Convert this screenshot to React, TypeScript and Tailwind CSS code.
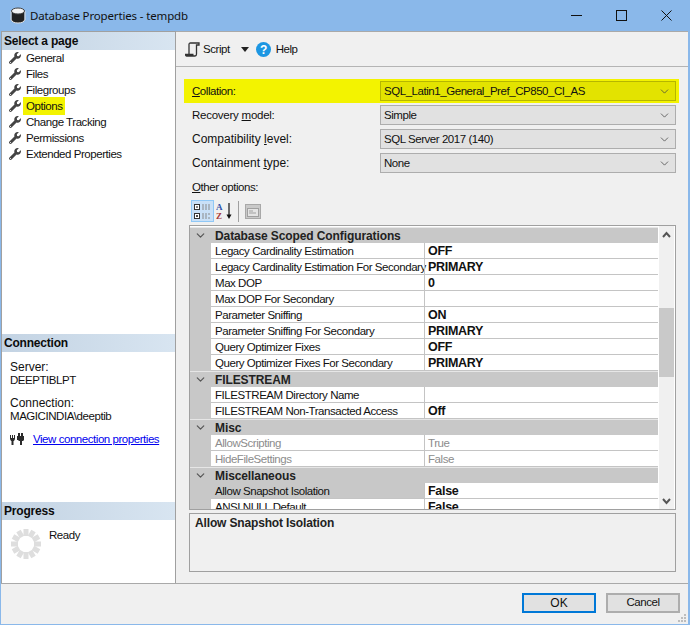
import { ChevronDown } from "lucide-react";
import { FaWrench } from "react-icons/fa";

const pages = ["General", "Files", "Filegroups", "Options", "Change Tracking", "Permissions", "Extended Properties"];

type Row = { name: string; value?: string; muted?: boolean; selected?: boolean };
type Group = { title: string; rows: Row[] };

const groups: Group[] = [
  {
    title: "Database Scoped Configurations",
    rows: [
      { name: "Legacy Cardinality Estimation", value: "OFF" },
      { name: "Legacy Cardinality Estimation For Secondary", value: "PRIMARY" },
      { name: "Max DOP", value: "0" },
      { name: "Max DOP For Secondary" },
      { name: "Parameter Sniffing", value: "ON" },
      { name: "Parameter Sniffing For Secondary", value: "PRIMARY" },
      { name: "Query Optimizer Fixes", value: "OFF" },
      { name: "Query Optimizer Fixes For Secondary", value: "PRIMARY" },
    ],
  },
  {
    title: "FILESTREAM",
    rows: [
      { name: "FILESTREAM Directory Name" },
      { name: "FILESTREAM Non-Transacted Access", value: "Off" },
    ],
  },
  {
    title: "Misc",
    rows: [
      { name: "AllowScripting", value: "True", muted: true },
      { name: "HideFileSettings", value: "False", muted: true },
    ],
  },
  {
    title: "Miscellaneous",
    rows: [
      { name: "Allow Snapshot Isolation", value: "False", selected: true },
      { name: "ANSI NULL Default", value: "False" },
    ],
  },
];

function SectionHeader({ title }: { title: string }) {
  return (
    <div className="h-[18px] shrink-0 pl-[2px] bg-gradient-to-r from-[#c3d3e3] to-[#d8e5f1] text-[12px] leading-[18px] font-bold tracking-[-0.2px] text-[#0c0c0c]">
      {title}
    </div>
  );
}

function Combo({ value, yellow }: { value: string; yellow?: boolean }) {
  return (
    <div
      className={`w-[296px] h-[20px] flex items-center justify-between pl-[3px] pr-[4px] border border-solid ${
        yellow ? "bg-[#e3e300] border-[#b6b600]" : "bg-[#e1e1e1] border-[#adadad]"
      }`}
    >
      <span>{value}</span>
      <ChevronDown size={13} strokeWidth={1.4} className="text-[#444]" />
    </div>
  );
}

function DbIcon() {
  return (
    <svg width="16" height="17" viewBox="0 0 16 17" className="shrink-0">
      <ellipse cx="8" cy="13" rx="6.5" ry="3" fill="#222" stroke="#ddd" />
      <rect x="1.5" y="4" width="13" height="9" fill="#222" />
      <path d="M1 4v9M15 4v9" stroke="#ddd" />
      <ellipse cx="8" cy="4" rx="6.5" ry="3" fill="#f4f4f4" stroke="#444" />
    </svg>
  );
}

function WindowButtons() {
  return (
    <div className="ml-auto flex items-center gap-[34px]">
      <svg width="11" height="11" viewBox="0 0 11 11" stroke="#111" fill="none">
        <path d="M0 5.5h11" />
      </svg>
      <svg width="11" height="11" viewBox="0 0 11 11" stroke="#111" fill="none">
        <rect x="0.5" y="0.5" width="10" height="10" />
      </svg>
      <svg width="11" height="11" viewBox="0 0 11 11" stroke="#111" fill="none">
        <path d="M0.5 0.5l10 10M10.5 0.5l-10 10" />
      </svg>
    </div>
  );
}

function ScriptIcon() {
  return (
    <svg width="15" height="15" viewBox="0 0 15 15" fill="none" stroke="#333" strokeWidth="1.3">
      <path d="M4 13V2.5c0-1 .5-1.5 1.5-1.5H14v2h-2.5V12c0 1-.5 2-1.5 2H1.5c-1 0-1-1-1-1.5h8" />
    </svg>
  );
}

function HelpIcon() {
  return (
    <svg width="15" height="15" viewBox="0 0 15 15">
      <circle cx="7.5" cy="7.5" r="7.5" fill="#1c96e2" />
      <text x="7.5" y="12" textAnchor="middle" fontSize="12" fontWeight="700" fill="#fff" fontFamily="'Liberation Sans', sans-serif">
        ?
      </text>
    </svg>
  );
}

function PlugIcon() {
  return (
    <svg width="15" height="13" viewBox="0 0 15 13" fill="#2b2b2b">
      <path d="M0 2h1v3h1V2h1v3h1V2h1v4l-1 2H3.5v4h-2V8H1L0 6z" />
      <path d="M8 0h2v3h1V0h2v3h1v4l-1 1h-1v4H10V8H9L8 7H7V3h1z" />
    </svg>
  );
}

function Spinner() {
  const marks = Array.from({ length: 12 }, (_, i) => i * 30);
  return (
    <svg width="30" height="30" viewBox="0 0 30 30" className="shrink-0">
      {marks.map((a) => (
        <rect key={a} x="12.5" y="0" width="5" height="7" fill="#dedede" transform={`rotate(${a} 15 15)`} />
      ))}
    </svg>
  );
}

function CategorizedIcon() {
  return (
    <svg width="19" height="17" viewBox="0 0 19 17" fill="none">
      <rect x="1.5" y="1.5" width="5" height="5" fill="#fff" stroke="#333" />
      <rect x="1.5" y="10.5" width="5" height="5" fill="#fff" stroke="#333" />
      <path d="M3 4h2M3 13h2M4 12v2" stroke="#111" />
      <path d="M9 2h8M9 4h8M9 6h8M9 11h8M9 13h6M9 15h8" stroke="#8a8a8a" strokeDasharray="2 1" />
    </svg>
  );
}

function SortIcon() {
  return (
    <svg width="18" height="18" viewBox="0 0 18 18">
      <text x="0" y="8" fontSize="9" fontWeight="700" fill="#2f52a8" fontFamily="'Liberation Serif', serif">
        A
      </text>
      <text x="0" y="17" fontSize="9" fontWeight="700" fill="#a83a3a" fontFamily="'Liberation Serif', serif">
        Z
      </text>
      <path d="M13 1v13" stroke="#111" strokeWidth="1.2" />
      <path d="M10.5 12.5h5L13 17z" fill="#111" />
    </svg>
  );
}

function PagesIcon() {
  return (
    <svg width="16" height="15" viewBox="0 0 16 15">
      <rect x="0.5" y="0.5" width="15" height="14" fill="#c9c9c9" stroke="#a8a8a8" />
      <rect x="2.5" y="4.5" width="11" height="8" fill="#e4e4e4" stroke="#a0a0a0" />
      <path d="M4 7h4M4 9h7" stroke="#a0a0a0" />
    </svg>
  );
}

function GridRow({ row }: { row: Row }) {
  return (
    <div className="flex h-[16px] shrink-0 leading-[16px]">
      <div className="w-[21px] shrink-0 bg-[#c8c8c8]" />
      <div
        className={`w-[213px] shrink-0 pl-[4px] whitespace-nowrap border-b border-solid border-[#c4c4c4] ${
          row.selected ? "bg-[#c8c8c8]" : ""
        } ${row.muted ? "text-[#8c8c8c]" : ""}`}
      >
        {row.name}
      </div>
      <div
        className={`flex-1 pl-[3px] border-l border-b border-solid border-[#c4c4c4] whitespace-nowrap ${
          row.muted ? "text-[#8c8c8c]" : "font-bold text-[12.5px] tracking-[-0.3px]"
        }`}
      >
        {row.value}
      </div>
    </div>
  );
}

export default function App() {
  return (
    <div className="w-[690px] h-[625px] flex flex-col overflow-hidden bg-[#8ab8ea] text-[11.5px] tracking-[-0.45px] leading-[16px] text-[#111] font-['Liberation_Sans',Arial,sans-serif]">
      {/* title bar */}
      <div className="h-[31px] shrink-0 flex items-center pl-[10px] pr-[18px]">
        <DbIcon />
        <span className="ml-[4px] text-[11.5px] tracking-[-0.15px] text-[#111] font-['Noto_Sans',sans-serif]">Database Properties - tempdb</span>
        <WindowButtons />
      </div>

      <div className="flex-1 min-h-0 mx-[1px] mb-[1px] mr-[2px] flex flex-col bg-[#f0f0f0]">
        <div className="flex-1 min-h-0 flex border-b border-solid border-[#a9a9a9]">
          {/* left panel */}
          <div className="w-[175px] shrink-0 flex flex-col bg-white border-x border-t border-solid border-[#a0a0a0]">
            <div className="h-[302px] shrink-0">
              <SectionHeader title="Select a page" />
              <div className="pl-[7px]">
                {pages.map((p) => (
                  <div key={p} className="flex items-center h-[16px]">
                    <FaWrench size={12} className="text-[#444] shrink-0" />
                    {p === "Options" ? (
                      <span className="ml-[2px] px-[3px] h-[18px] leading-[18px] bg-[#f3f300]">{p}</span>
                    ) : (
                      <span className="ml-[5px]">{p}</span>
                    )}
                  </div>
                ))}
              </div>
            </div>
            <div className="h-[168px] shrink-0">
              <SectionHeader title="Connection" />
              <div className="pl-[8px] pt-[7px]">
                <div className="text-[12px] tracking-normal">Server:</div>
                <div className="-mt-[3px]">DEEPTIBLPT</div>
                <div className="mt-[7px] text-[12px] tracking-normal">Connection:</div>
                <div className="-mt-[3px]">MAGICINDIA\deeptib</div>
                <div className="flex items-center mt-[7px]">
                  <PlugIcon />
                  <span className="ml-[8px] text-[#0000ee] underline whitespace-nowrap">View connection properties</span>
                </div>
              </div>
            </div>
            <div className="flex-1">
              <SectionHeader title="Progress" />
              <div className="flex pl-[9px] pt-[9px]">
                <Spinner />
                <span className="ml-[8px] -mt-[2px]">Ready</span>
              </div>
            </div>
          </div>

          {/* right panel */}
          <div className="flex-1 min-w-0 flex flex-col">
            <div className="h-[36px] shrink-0 flex items-center pl-[9px] border-t border-b border-solid border-t-[#a9a9a9] border-b-[#b4b4b4]">
              <ScriptIcon />
              <span className="ml-[3px]">Script</span>
              <svg width="8" height="5" viewBox="0 0 8 5" className="ml-[11px]">
                <path d="M0 0h8L4 5z" fill="#222" />
              </svg>
              <span className="ml-[7px] flex">
                <HelpIcon />
              </span>
              <span className="ml-[5px]">Help</span>
            </div>

            <div className="pl-[13px] pr-[12px] pt-[14px] flex flex-col">
              <div className="pl-[3px] flex flex-col gap-[4px]">
                <div className="flex items-center justify-between bg-[#f3f300] -ml-[8px] pl-[8px] -mr-[3px] pr-[3px] -my-[2px] py-[2px]">
                  <span>
                    <u>C</u>ollation:
                  </span>
                  <Combo value="SQL_Latin1_General_Pref_CP850_CI_AS" yellow />
                </div>
                <div className="flex items-center justify-between">
                  <span className="tracking-[-0.25px]">
                    Recovery <u>m</u>odel:
                  </span>
                  <Combo value="Simple" />
                </div>
                <div className="flex items-center justify-between">
                  <span className="text-[12px] tracking-normal">
                    Compatibility <u>l</u>evel:
                  </span>
                  <Combo value="SQL Server 2017 (140)" />
                </div>
                <div className="flex items-center justify-between">
                  <span className="text-[12px] tracking-normal">
                    Containment <u>t</u>ype:
                  </span>
                  <Combo value="None" />
                </div>
              </div>

              <div className="pl-[3px] mt-[6px]">
                <u>O</u>ther options:
              </div>

              <div className="h-[22px] mt-[5px] flex items-center pl-[2px]">
                <div className="w-[23px] h-[22px] flex items-center justify-center bg-[#c9e0f7] border border-solid border-[#90c8f6]">
                  <CategorizedIcon />
                </div>
                <span className="ml-[2px] flex">
                  <SortIcon />
                </span>
                <div className="w-px h-[21px] bg-[#a0a0a0] ml-[4px]" />
                <span className="ml-[6px] flex">
                  <PagesIcon />
                </span>
              </div>

              {/* property grid */}
              <div className="h-[285px] mt-[3px] flex bg-white border border-solid border-[#a0a0a0] overflow-hidden">
                <div className="flex-1 min-w-0 pt-px flex flex-col overflow-hidden">
                  {groups.map((g) => (
                    <div key={g.title} className="flex flex-col shrink-0">
                      <div className="h-[16px] flex items-center bg-[#c8c8c8] border-t border-solid border-[#e6e6e6] font-bold text-[12px] tracking-[-0.1px] text-[#222]">
                        <div className="w-[21px] flex justify-center">
                          <ChevronDown size={13} strokeWidth={2.2} className="text-[#555]" />
                        </div>
                        <span className="pl-[4px]">{g.title}</span>
                      </div>
                      {g.rows.map((r) => (
                        <GridRow key={r.name} row={r} />
                      ))}
                    </div>
                  ))}
                </div>
                <div className="w-[15px] shrink-0 ml-px mr-px flex flex-col items-stretch bg-[#f0f0f0]">
                  <div className="h-[16px] flex items-center justify-center text-[#555]">
                    <svg width="9" height="7" viewBox="0 0 9 7" fill="none" stroke="currentColor" strokeWidth="2">
                      <path d="M1 6l3.5-4L8 6" />
                    </svg>
                  </div>
                  <div className="h-[66px]" />
                  <div className="h-[69px] bg-[#c9c9c9]" />
                  <div className="flex-1" />
                  <div className="h-[16px] flex items-center justify-center text-[#555]">
                    <svg width="9" height="7" viewBox="0 0 9 7" fill="none" stroke="currentColor" strokeWidth="2">
                      <path d="M1 1l3.5 4L8 1" />
                    </svg>
                  </div>
                </div>
              </div>

              {/* description */}
              <div className="h-[59px] mt-[3px] border border-solid border-[#a0a0a0] pl-[5px] pt-[1px] font-bold text-[12px] tracking-[-0.15px] text-[#222]">
                Allow Snapshot Isolation
              </div>
            </div>
          </div>
        </div>

        {/* footer */}
        <div className="h-[40px] shrink-0 flex justify-end items-start pt-[9px] pr-[8px] gap-[10px] relative">
          <button className="w-[74px] h-[20px] bg-[#e1e1e1] border-2 border-solid border-[#0078d7] text-[12px] tracking-normal leading-none">OK</button>
          <button className="w-[74px] h-[20px] bg-[#e1e1e1] border-2 border-solid border-[#adadad] leading-none">Cancel</button>
          <svg width="10" height="10" viewBox="0 0 10 10" className="absolute right-[1px] bottom-[1px]" fill="#bdbdbd">
            <rect x="7" y="1" width="2" height="2" />
            <rect x="4" y="4" width="2" height="2" />
            <rect x="7" y="4" width="2" height="2" />
            <rect x="1" y="7" width="2" height="2" />
            <rect x="4" y="7" width="2" height="2" />
            <rect x="7" y="7" width="2" height="2" />
          </svg>
        </div>
      </div>
    </div>
  );
}
